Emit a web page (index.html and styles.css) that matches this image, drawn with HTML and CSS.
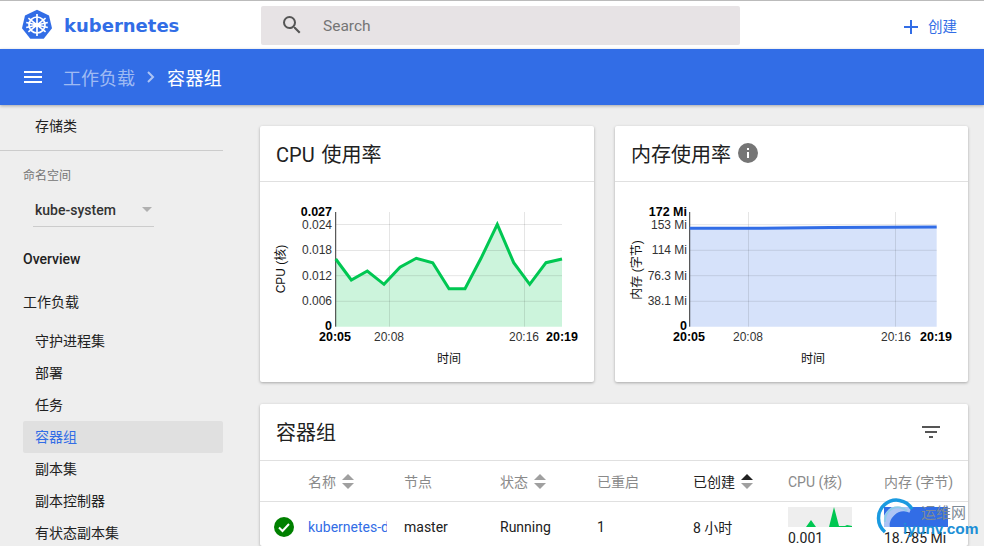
FILE: index.html
```html
<!DOCTYPE html>
<html lang="zh">
<head>
<meta charset="utf-8">
<title>容器组 - Kubernetes Dashboard</title>
<link rel="stylesheet" href="styles.css">
</head>
<body>
<header class="topbar">
  <div class="brand">
    <svg class="logo" viewBox="0 0 32 32" width="32" height="32" aria-hidden="true">
      <path class="logo-hept" d="M16 .8 28 6.400 31 19.300 22.700 29.800H9.300L1 19.300 4 6.400Z"/>
      <g class="logo-wheel">
        <circle cx="16" cy="16" r="8"/>
        <path d="M16 5V27M7.400 9.200 24.600 22.800M24.600 9.200 7.400 22.800M5.200 18.500 26.800 13.500M26.800 18.500 5.200 13.500"/>
      </g>
      <circle class="logo-hub" cx="16" cy="16" r="2.200"/>
    </svg>
    <span class="brand-name">kubernetes</span>
  </div>
  <div class="search">
    <svg class="search-icon" viewBox="0 0 24 24" width="24" height="24" aria-hidden="true">
      <path d="M15.500 14h-.790l-.280-.270A6.470 6.470 0 0 0 16 9.500 6.500 6.500 0 1 0 9.500 16c1.610 0 3.090-.590 4.230-1.570l.270.280v.790l5 4.990L20.490 19l-4.990-5zm-6 0C7.010 14 5 11.990 5 9.500S7.010 5 9.500 5 14 7.010 14 9.500 11.990 14 9.500 14z"/>
    </svg>
    <span class="search-text">Search</span>
  </div>
  <div class="create">
    <svg class="create-icon" viewBox="0 0 14 14" width="14" height="14" aria-hidden="true"><path d="M6 0h2v6h6v2H8v6H6V8H0V6h6z"/></svg>
    <span>创建</span>
  </div>
</header>

<div class="actionbar">
  <svg class="menu" viewBox="0 0 18 12" width="18" height="12" aria-hidden="true"><path d="M0 0h18v2H0zM0 5h18v2H0zM0 10h18v2H0z"/></svg>
  <span class="crumb-parent">工作负载</span>
  <svg class="crumb-sep" viewBox="0 0 8 12" width="8" height="12" aria-hidden="true"><path d="M1 1l5 5-5 5"/></svg>
  <span class="crumb-current">容器组</span>
</div>

<div class="layout">
  <nav class="sidebar">
    <a class="nav-item sub">存储类</a>
    <hr class="divider">
    <div class="ns-label">命名空间</div>
    <div class="ns-select"><span>kube-system</span><i class="caret"></i></div>
    <a class="nav-item top strong">Overview</a>
    <a class="nav-item top group">工作负载</a>
    <a class="nav-item sub">守护进程集</a>
    <a class="nav-item sub">部署</a>
    <a class="nav-item sub">任务</a>
    <a class="nav-item sub active">容器组</a>
    <a class="nav-item sub">副本集</a>
    <a class="nav-item sub">副本控制器</a>
    <a class="nav-item sub">有状态副本集</a>
  </nav>

  <main class="main">
    <div class="charts">
      <section class="card">
        <h2 class="card-title">CPU 使用率</h2>
        <svg class="chart" viewBox="260 182 334 200" width="334" height="200">
          <path class="area-green" d="M335.700 259 351.300 280 367.300 271 384 284.300 400 267.300 416.300 258.300 432.700 262.700 449 288.700 465 288.700 481 258.300 497.300 224.300 513.700 262.700 529.700 284.300 546 262.700 562 259V326.700H335.700Z"/>
          <path class="grid" d="M335.700 224.500H562M335.700 250.500H562M335.700 275.700H562M335.700 301.300H562M389.500 212V326.700M524.500 212V326.700"/>
          <path class="axis" d="M335.700 212V326.700"/>
          <path class="line-green" d="M335.700 259 351.300 280 367.300 271 384 284.300 400 267.300 416.300 258.300 432.700 262.700 449 288.700 465 288.700 481 258.300 497.300 224.300 513.700 262.700 529.700 284.300 546 262.700 562 259"/>
          <text class="tick b end" x="332" y="216">0.027</text>
          <text class="tick end" x="332" y="229">0.024</text>
          <text class="tick end" x="332" y="254">0.018</text>
          <text class="tick end" x="332" y="280">0.012</text>
          <text class="tick end" x="332" y="305">0.006</text>
          <text class="tick b end" x="332" y="330">0</text>
          <text class="tick b mid" x="335" y="341">20:05</text>
          <text class="tick mid" x="389" y="341">20:08</text>
          <text class="tick mid" x="524" y="341">20:16</text>
          <text class="tick b mid" x="562" y="341">20:19</text>
          <text class="label mid" x="449" y="363">时间</text>
          <text class="label mid" transform="translate(285 269) rotate(-90)">CPU (核)</text>
        </svg>
      </section>
      <section class="card">
        <h2 class="card-title">内存使用率<svg class="info" viewBox="0 0 20 20" width="20" height="20" aria-hidden="true"><path d="M10 0a10 10 0 1 0 0 20 10 10 0 0 0 0-20zm1 15H9V9h2zm0-8H9V5h2z"/></svg></h2>
        <svg class="chart" viewBox="615 182 353 200" width="353" height="200">
          <path class="area-blue" d="M689.700 228.300 760 228.300 830 227.400 936.700 227V326.700H689.700Z"/>
          <path class="grid" d="M689.700 224.700H936.700M689.700 250.300H936.700M689.700 275.700H936.700M689.700 301.300H936.700M748.500 212V326.700M895.500 212V326.700"/>
          <path class="axis" d="M689.700 212V326.700"/>
          <path class="line-blue" d="M689.700 228.300 760 228.300 830 227.400 936.700 227"/>
          <text class="tick b end" x="687" y="216">172 Mi</text>
          <text class="tick end" x="687" y="229">153 Mi</text>
          <text class="tick end" x="687" y="254">114 Mi</text>
          <text class="tick end" x="687" y="280">76.3 Mi</text>
          <text class="tick end" x="687" y="305">38.1 Mi</text>
          <text class="tick b end" x="687" y="330">0</text>
          <text class="tick b mid" x="689" y="341">20:05</text>
          <text class="tick mid" x="748" y="341">20:08</text>
          <text class="tick mid" x="896" y="341">20:16</text>
          <text class="tick b mid" x="936" y="341">20:19</text>
          <text class="label mid" x="813" y="363">时间</text>
          <text class="label mid" transform="translate(641 270) rotate(-90)">内存 (字节)</text>
        </svg>
      </section>
    </div>

    <section class="card pods">
      <div class="pods-head">
        <h2 class="card-title plain">容器组</h2>
        <svg class="filter" viewBox="0 0 18 12" width="18" height="12" aria-hidden="true"><path d="M0 0h18v2H0zM3 5h12v2H3zM7 10h4v2H7z"/></svg>
      </div>
      <div class="row head">
        <span></span>
        <span class="th">名称<i class="sort"></i></span>
        <span class="th">节点</span>
        <span class="th">状态<i class="sort"></i></span>
        <span class="th">已重启</span>
        <span class="th on">已创建<i class="sort desc"></i></span>
        <span class="th">CPU (核)</span>
        <span class="th">内存 (字节)</span>
      </div>
      <div class="row body">
        <svg class="ok" viewBox="0 0 20 20" width="20" height="20" aria-hidden="true"><circle cx="10" cy="10" r="10"/><path d="M5 10.500l3.500 3.500L15 7"/></svg>
        <a class="pod-link">kubernetes-dashboard</a>
        <span>master</span>
        <span>Running</span>
        <span>1</span>
        <span>8 小时</span>
        <div class="metric">
          <svg class="spark" viewBox="0 0 64 20" width="64" height="20" aria-hidden="true"><path d="M18 20l5-7 5 7zM41 20l5-20 5 19 6 0 2-1 5 1v1z"/></svg>
          <span>0.001</span>
        </div>
        <div class="metric">
          <div class="spark-blue"></div>
          <span>18.785 Mi</span>
        </div>
      </div>
    </section>
  </main>
</div>

<div class="watermark">
  <svg class="wm-ring" viewBox="0 0 44 44" width="44" height="44" aria-hidden="true">
    <path class="halo" d="M35 13A18 18 0 0 0 11 36"/>
    <path d="M36 13A18 18 0 1 0 9 36"/>
    <path class="thin" d="M31 15A13 13 0 0 0 9 26"/>
  </svg>
  <span class="wm-cn">运维网</span>
  <span class="wm-en">iyunv.com</span>
</div>
</body>
</html>
```
FILE: styles.css
```css
* { box-sizing: border-box; }
html, body { height: 100%; }
body {
  margin: 0;
  height: 546px;
  overflow: hidden;
  background: #eee;
  color: #212121;
  font-family: Roboto, "Noto Sans CJK SC", sans-serif;
  font-size: 14px;
}
.topbar {
  display: flex;
  align-items: center;
  height: 49px;
  padding-right: 27px;
  background: #fff;
  border-top: 1px solid #bbb;
}
.brand { display: flex; align-items: center; width: 261px; padding-left: 21px; }
.logo { display: block; }
.logo-hept { fill: #326de6; }
.logo-wheel { fill: none; stroke: #fff; stroke-width: 1.700; }
.logo-hub { fill: #fff; }
.brand-name {
  margin-left: 11px;
  color: #326de6;
  font-family: "DejaVu Sans", sans-serif;
  font-size: 18px;
  font-weight: 700;
}
.search {
  display: flex;
  align-items: center;
  width: 479px;
  height: 39px;
  padding-left: 19px;
  background: #e7e3e5;
  border-radius: 2px;
}
.search-icon { fill: #555; }
.search-text { margin: 2px 0 0 19px; color: #757575; font-size: 15.500px; }
.create { display: flex; align-items: center; margin-left: auto; color: #326de6; font-size: 14.500px; }
.create span { margin-left: 10px; }
.create-icon { fill: #326de6; margin-top: 3px; }
.actionbar {
  display: flex;
  align-items: center;
  height: 56px;
  padding-left: 24px;
  background: #326de6;
  color: #fff;
  font-size: 18px;
  box-shadow: 0 1px 3px rgba(0,0,0,.3);
  position: relative;
}
.menu { fill: #fff; }
.crumb-parent { margin-left: 21px; color: rgba(255,255,255,.55); }
.crumb-sep { margin: 0 12px 0 12px; fill: none; stroke: rgba(255,255,255,.6); stroke-width: 2; }
.crumb-current { letter-spacing: .4px; }
.layout { display: flex; }
.sidebar { flex: none; width: 246px; padding: 5px 23px 0 0; }
.nav-item { display: flex; align-items: center; height: 32px; line-height: 1; color: #212121; }
.nav-item.sub { margin-left: 23px; padding-left: 12px; }
.nav-item.top { margin-left: 23px; height: 43px; }
.nav-item.group { margin-bottom: 2px; }
.nav-item.strong { font-weight: 500; }
.nav-item.active { background: #e0e0e0; color: #326de6; border-radius: 2px; }
.divider { margin: 8px 0 0; border: 0; border-top: 1px solid #ccc; }
.ns-label { margin: 17px 0 0 23px; color: #757575; font-size: 12px; line-height: 17px; }
.ns-select {
  display: flex;
  align-items: center;
  justify-content: space-between;
  width: 121px;
  height: 34px;
  margin: 8px 0 10px 33px;
  padding: 0 2px;
  font-weight: 500;
  color: #333;
  font-size: 14px;
  border-bottom: 1px solid #ccc;
}
.caret { width: 0; height: 0; border: 5px solid transparent; border-top: 5px solid #b0b0b0; border-bottom: 0; }
.main { flex: none; width: 738px; padding: 21px 16px 0 14px; }
.charts { display: grid; grid-template-columns: 334px 353px; gap: 21px; }
.card { background: #fff; box-shadow: 0 1px 3px rgba(0,0,0,.3); border-radius: 2px; }
.card-title {
  display: flex;
  align-items: center;
  height: 56px;
  margin: 0;
  padding: 0 0 1px 16px;
  border-bottom: 1px solid #e0e0e0;
  font-size: 20px;
  font-weight: 400;
  word-spacing: 2px;
}
.card-title.plain { border: 0; padding-bottom: 2px; }
.info { fill: #757575; margin-left: 7px; }
.chart { display: block; }
.grid { fill: none; stroke: #000; stroke-opacity: .1; stroke-width: 1; }
.axis { fill: none; stroke: #333; stroke-width: 1; }
.area-green { fill: #00c752; fill-opacity: .2; }
.line-green { fill: none; stroke: #00c752; stroke-width: 3; }
.area-blue { fill: #326de6; fill-opacity: .2; }
.line-blue { fill: none; stroke: #326de6; stroke-width: 3; }
.tick { font-family: "Liberation Sans", sans-serif; font-size: 12px; fill: #333; }
.tick.b { font-size: 12.500px; font-weight: 700; fill: #000; }
.label { font-family: "Liberation Sans", "Noto Sans CJK SC", sans-serif; font-size: 12px; fill: #111; }
.end { text-anchor: end; }
.mid { text-anchor: middle; }
.pods { margin-top: 22px; height: 142px; overflow: hidden; }
.pods-head { display: flex; align-items: center; justify-content: space-between; height: 57px; padding-right: 28px; border-bottom: 1px solid #e0e0e0; }
.filter { fill: #555; }
.row {
  display: grid;
  grid-template-columns: 48px 96px 96px 97px 96px 95px 96px 80px;
  align-items: center;
}
.row.head { height: 41px; border-bottom: 1px solid #e0e0e0; }
.th { display: flex; align-items: center; color: #8a8a8a; font-size: 14px; white-space: nowrap; }
.th.on { color: #212121; }
.sort { position: relative; display: block; width: 12px; height: 15px; margin-left: 6px; }
.sort::before, .sort::after { content: ""; position: absolute; left: 0; width: 0; height: 0; border: 6px solid transparent; }
.sort::before { top: 0; border-top: 0; border-bottom: 6px solid #a0a0a0; }
.sort::after { bottom: 0; border-bottom: 0; border-top: 6px solid #a0a0a0; }
.sort.desc::before { border-bottom-color: #212121; }
.row.body { height: 50px; font-size: 14px; }
.ok { margin-left: 14px; }
.ok circle { fill: #008000; }
.ok path { fill: none; stroke: #fff; stroke-width: 2; }
.pod-link { display: block; overflow: hidden; width: 79px; white-space: nowrap; color: #326de6; }
.metric { align-self: start; padding-top: 5px; }
.metric span { display: block; margin-top: 2px; line-height: 18px; white-space: nowrap; }
.spark { display: block; background: #eee; fill: #00c752; }
.spark-blue { width: 64px; height: 20px; background: #326de6; }
.watermark {
  position: absolute;
  left: 876px;
  top: 496px;
  width: 108px;
  height: 50px;
}
.wm-ring { position: absolute; left: 0; top: 0; fill: none; stroke: #1a9ae0; stroke-width: 3.500; }
.wm-ring .halo { stroke: #fff; stroke-width: 8; stroke-opacity: .6; }
.wm-ring .thin { stroke: #8ccbe9; stroke-width: 2; }
.wm-cn { position: absolute; left: 45px; top: 8px; color: #7d8a96; font-size: 15px; line-height: 18px; }
.wm-en { position: absolute; left: 27px; top: 24px; color: #1c8fd6; font: 700 15.500px/17px "Liberation Sans", sans-serif; }
```
